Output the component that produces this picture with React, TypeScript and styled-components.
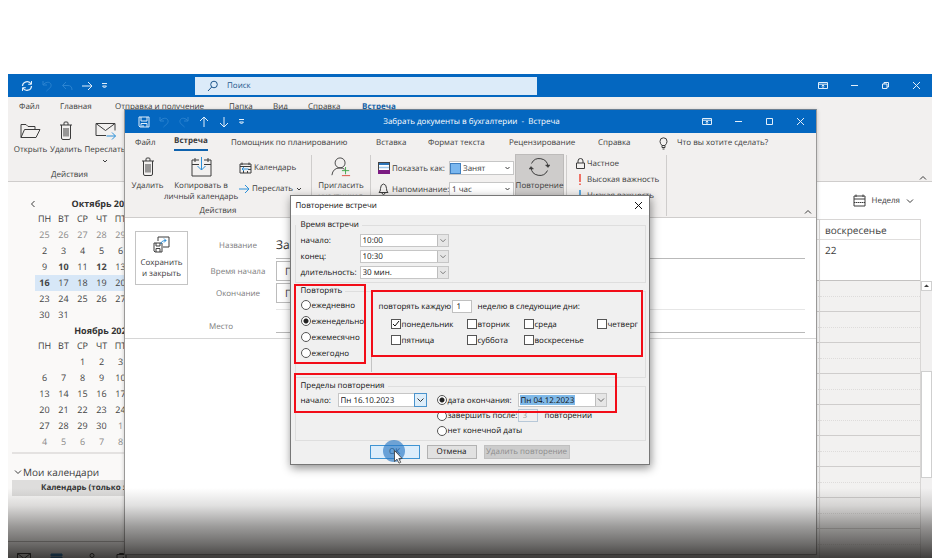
import React from "react";
import styled, { createGlobalStyle, css } from "styled-components";

const GlobalStyle = createGlobalStyle`
  *, *::before, *::after { box-sizing: border-box; }
  body { margin: 0; background: #fff; font-family: "Open Sans", "Noto Sans", sans-serif; font-size: 9px; color: #3c3c3c; overflow: hidden; text-rendering: geometricPrecision; }
  button, input, select { font: inherit; color: inherit; margin: 0; padding: 0; border: 0; background: none; border-radius: 0; text-rendering: inherit; }
  svg { display: block; flex: none; }
  a { color: inherit; text-decoration: none; }
`;

/* ---------- icons ---------- */

const Svg = styled.svg`
  fill: none;
  stroke: currentColor;
  stroke-width: 1;
`;

type IconProps = { name: keyof typeof shapes; w: number; h: number };

const shapes = {
  sync: <><path d="M1.500 6a4.600 4.600 0 0 1 8.600-2M10.500 6a4.600 4.600 0 0 1-8.600 2" strokeWidth="1.300" /><path d="M10.500 1v3.300H7.200M1.500 11V7.700h3.300" /></>,
  undo: <path d="M2 1v4h4M2 5c2-3 7-4 8-.500.600 3-2 4-4.500 6.500" />,
  redo: <path d="M10 1v4H6M10 5C8 2 3 1 2 4.500c-.600 3 2 4 4.500 6.500" />,
  reply: <path d="M5 2 1.500 5.500 5 9M1.500 5.500H7q4 0 4 4.500" />,
  right: <path d="M1 6h10M7 2l4 4-4 4" />,
  up: <path d="M6 11V1M2 5l4-4 4 4" />,
  down: <path d="M6 1v10M2 7l4 4 4-4" />,
  more: <path d="M1 2.500h5M1.500 5 3.500 7 5.500 5Z" />,
  search: <><circle cx="7" cy="4.500" r="3.300" /><path d="M4.700 7 1 11" /></>,
  save: <path d="M1 1h10v10H2L1 10ZM3 1v4h6V1M3 11V7.500h6V11M5 11V9" />,
  ribbon: <path d="M.500 1.500h9v6h-9ZM.500 3.200h9M5 7V4M3.700 5.200 5 4l1.300 1.200" />,
  min: <path d="M1 4.500h7" />,
  max: <path d="M1.500 1.500h6v6h-6Z" />,
  restore: <path d="M1.500 3h4.500v4.500H1.500ZM3 3V1.500h4.500V6H6" />,
  close: <path d="m1 1 7 7M8 1 1 8" />,
  chevDown: <path d="m1 1.500 3 3 3-3" />,
  chevUp: <path d="m1 4.500 3-3 3 3" />,
  smallDown: <path d="m2 2 2 2 2-2" />,
  chevLeft: <path d="M4.500 1 1.500 4l3 3" />,
  caret: <path d="M1 4h5L3.500 1.500Z" fill="currentColor" stroke="none" />,
  folder: <path d="M1 15V2h5l2 2h7v3M1 15 4.500 7H20l-4 8Z" />,
  trash: <path d="M1 4h12M5 4V2q0-1 1-1h2q1 0 1 1v2M2.500 4v13q0 1.500 1.500 1.500h6q1.500 0 1.500-1.500V4M5 7v8.500M7 7v8.500M9 7v8.500" />,
  mail: <><path d="M11 14H1V2h19v7M1 2l9.500 7L20 2" /><path stroke="#2b8fd8" d="M11.500 14.500h9M17 11l3.500 3.500L17 18" /></>,
  calDown: <><path d="M8 3H1v16h19V3h-7M1 7.500h7M13 7.500h7M4 1v4M17 1v4" /><path stroke="#2b8fd8" d="M10.500 0v13M6.500 9l4 4 4-4" /></>,
  calLeft: <><path d="M1 2h11v9H1ZM1 4.500h11M3 .500V3M10 .500V3M9 7.500h3M4.500 9v2M8.500 9v2" /><path stroke="#2b8fd8" d="M3 7h6.500M5 5 3 7l2 2" /></>,
  blueRight: <path stroke="#2b8fd8" d="M0 5h10M6 1l4 4-4 4" />,
  person: <><circle cx="10" cy="6.500" r="5.500" /><path d="M1 20q1-8 9-8 3 0 5 1.500" /><path stroke="#3fa345" d="M16 11v8M12 15h8" /><path stroke="#d9473b" d="M12 20.500h9" /></>,
  status: <><rect x=".500" y=".500" width="11" height="11" stroke="#444" fill="#fff" /><path stroke="#2d75b8" strokeWidth="2" d="M1 2h10" /><path stroke="#9dc7ea" strokeWidth="1.500" d="M1 5.500h10" /><path stroke="#7b1b82" strokeWidth="4" d="M0 10h12" /></>,
  bell: <path d="M1 9.500q1.500-1 1.500-4 0-4 3-4.500 3 .500 3 4.500 0 3 1.500 4ZM4 9.500q0 2 1.500 2T7 9.500" />,
  cycle: <><path d="M2.500 6.500a8.700 8.700 0 0 1 16.500 3M18.500 13.500a8.700 8.700 0 0 1-16.500-3" /><path d="m16.500 8 2.500 2.500L21 8ZM4.500 12 2 9.500 0 12Z" fill="currentColor" strokeWidth=".5" /></>,
  lock: <path d="M.500 5h8v5.500h-8ZM2 5V3q0-2.500 2.500-2.500T7 3v2" />,
  high: <path stroke="#f0483a" strokeWidth="1.500" d="M4 0v8M4 9.500V11" />,
  low: <path stroke="#2b8fd8" strokeWidth="1.500" d="M4 0v11M2 8l2 2 2-2" />,
  bulb: <path d="M3 8.500Q1 6.500 1 4.300a3.500 3.500 0 0 1 7 0Q8 6.500 6 8.500v2H3ZM3 8.500h3M3.500 12h2" />,
  saveClose: <><path d="M5 5V1h11v10h-6M1 7h8v9H2l-1-1ZM3 7v3h4V7M3 16v-3.500h4V16" /><path stroke="#2b8fd8" d="M8 8q0-3.500 5-3.500M11 2.500l2 2-2 2" /></>,
  week: <><path d="M1 2h11v10H1ZM1 5h11M3 .500V3M10 .500V3" /><path d="M1 8.500h11" strokeDasharray="1.500 .5" /></>,
  navMail: <path d="M.500 1.500h13v9H.500Zl6.500 5 6.500-5" />,
  navCal: <path stroke="#1573b8" fill="#1573b8" d="M1 2h11v2H1ZM1 5v6h11V5" />,
  navPeople: <path d="M8 3.500a2 2 0 1 0 4 0 2 2 0 0 0-4 0ZM6 11q0-4 4-4t4 4M3 6.500h.500M1 10l3-2" />,
  navTask: <path d="M1 2.500h9v9H1ZM3.500 2.500v-1h4v1M3.500 6l1.500 1.500L8 5" />,
};

const Icon = ({ name, w, h }: IconProps) => (
  <Svg width={w} height={h} viewBox={`0 0 ${w} ${h}`} aria-hidden="true">{shapes[name]}</Svg>
);

/* ---------- desktop and main window ---------- */

const Page = styled.div`
  height: 100vh;
  padding: 74px 8px 0;
  overflow: hidden;
`;
const MainWindow = styled.div`
  position: relative;
  height: 100%;
  display: flex;
  flex-direction: column;
  background: #fff;
  overflow: hidden;
`;
const TitleBar = styled.header`
  flex: none;
  height: 23px;
  display: flex;
  align-items: center;
  background: #0467c0;
  color: #fff;
`;
const QuickBar = styled.div<{ $fixed?: boolean }>`
  ${(p) => (p.$fixed ? css`flex: none; width: 187px;` : css`flex: 1;`)}
  display: flex;
  align-items: center;
  gap: 8px;
  padding-left: 13px;
`;
const BarButton = styled.button<{ $faded?: boolean }>`
  display: flex;
  color: ${(p) => (p.$faded ? "#2b83d0" : "#e2effa")};
`;
const WindowButtons = styled.div`
  flex: 1;
  display: flex;
  justify-content: flex-end;
  align-items: center;
  gap: 22px;
  padding-right: 11px;
`;
const SearchBox = styled.label`
  flex: none;
  width: 37%;
  height: 18px;
  display: flex;
  align-items: center;
  gap: 9px;
  padding-left: 12px;
  background: #dcebf9;
  color: #1d568c;
  font-size: 8px;
  input { flex: 1; min-width: 0; outline: 0; }
  input::placeholder { color: #1d568c; opacity: 1; }
`;
const Ribbon = styled.div`
  flex: none;
  display: flex;
  flex-direction: column;
  background: #f2f0ef;
  border-bottom: 1px solid #cfcdcc;
`;
const Tabs = styled.nav<{ $columns: string; $inset: number }>`
  display: grid;
  grid-template-columns: ${(p) => p.$columns};
  height: 20px;
  line-height: 20px;
  padding-left: ${(p) => p.$inset}px;
  font-size: 8px;
  white-space: nowrap;
`;
const Tab = styled.a<{ $active?: boolean; $blue?: boolean }>`
  justify-self: start;
  display: flex;
  align-items: center;
  gap: 9px;
  height: 20px;
  ${(p) => p.$active && css`height: 18px; font-weight: 700; border-bottom: 2px solid #0f62ad;`}
  ${(p) => p.$blue && css`font-weight: 700; color: #1463a8;`}
`;
const MainTools = styled.div`
  display: flex;
  justify-content: space-between;
  align-items: flex-end;
  height: 64px;
  padding: 0 5px 0 6px;
`;
const ToolGroup = styled.div`
  display: flex;
  flex-direction: column;
  align-items: center;
`;
const ToolRow = styled.div`
  display: flex;
  gap: 3px;
  align-items: flex-start;
  height: 48px;
`;
const BigTool = styled.button<{ $width: number; $pressed?: boolean }>`
  flex: none;
  width: ${(p) => p.$width}px;
  display: flex;
  flex-direction: column;
  align-items: center;
  gap: 3px;
  line-height: 11px;
  font-size: 8px;
  white-space: nowrap;
  > svg:first-child { height: 20px; }
  ${(p) => p.$pressed && css`background: #cecccb; border: 1px solid #bdbbba; margin-top: -3px; padding-top: 2px; height: 60px;`}
`;
const GroupLabel = styled.div`
  font-size: 8px;
  line-height: 12px;
`;
const IconButton = styled.button`
  display: flex;
`;
const MainBody = styled.div`
  flex: 1;
  min-height: 0;
  display: flex;
`;

/* ---------- sidebar ---------- */

const Sidebar = styled.aside`
  flex: none;
  width: 170px;
  padding: 14px 0 0 4px;
  background: #faf9f8;
`;
const MonthHead = styled.div`
  display: grid;
  grid-template-columns: 6px 120px;
  column-gap: 7px;
  align-items: center;
  height: 15px;
  padding-left: 18px;
`;
const MonthTitle = styled.div`
  grid-column: 2;
  text-align: center;
  font-weight: 700;
  color: #333;
`;
const MonthTable = styled.table`
  margin-left: 23px;
  border-collapse: collapse;
  table-layout: fixed;
  width: 133px;
  th, td { height: 16px; padding: 0; text-align: center; font-weight: 400; line-height: 16px; }
`;
const Day = styled.td<{ $bold?: boolean; $muted?: boolean }>`
  && { font-weight: ${(p) => (p.$bold ? 700 : 400)}; }
  color: ${(p) => (p.$muted ? "#8b8a89" : "#444")};
`;
const Week = styled.tr<{ $current?: boolean }>`
  background: ${(p) => (p.$current ? "#d7e7f7" : "transparent")};
`;
const ListHead = styled.button`
  display: flex;
  align-items: center;
  gap: 1px;
  width: 100%;
  height: 28px;
  margin-top: 2px;
  padding: 9px 0 0 2px;
  border-top: 2px solid #e4e2e1;
  font-size: 10px;
`;
const ListItem = styled.div`
  height: 16px;
  line-height: 16px;
  padding-left: 29px;
  background: #dedddc;
  font-weight: 700;
  font-size: 8px;
  white-space: nowrap;
  color: #333;
`;
const NavIcons = styled.div`
  display: flex;
  gap: 19px;
  margin: 45px 0 0 -4px;
  padding: 10px 0 0 9px;
  border-top: 1px solid #b5b3b2;
  color: #222;
`;

/* ---------- week view ---------- */

const WeekView = styled.main`
  flex: 1;
  display: flex;
  flex-direction: column;
  min-width: 0;
`;
const ViewBar = styled.div`
  flex: none;
  height: 37px;
  display: flex;
  justify-content: flex-end;
  align-items: center;
  padding-right: 18px;
  font-size: 8px;
`;
const ViewButton = styled.button`
  display: flex;
  align-items: center;
  gap: 6px;
`;
const WeekScroll = styled.div`
  flex: 1;
  min-height: 0;
  display: flex;
`;
const DayColumn = styled.section<{ $grow?: boolean }>`
  ${(p) => (p.$grow ? css`flex: 1;` : css`flex: none; width: 101px;`)}
  display: flex;
  flex-direction: column;
  border: 1px solid #d8d6d5;
  border-width: 1px 1px 0 0;
`;
const DayName = styled.div`
  height: 20px;
  padding-left: 5px;
  line-height: 20px;
  font-size: 10px;
  border-bottom: 1px solid #e0dedd;
`;
const DayNumber = styled.div`
  height: 41px;
  padding: 3px 5px;
  font-size: 10px;
  border-bottom: 1px solid #c4c2c1;
`;
const Slots = styled.div<{ $light?: boolean }>`
  flex: 1;
  overflow: hidden;
  background: ${(p) => (p.$light ? "#fafafa" : "#f2f1f0")};
`;
const Slot = styled.div`
  height: 31px;
  border-bottom: 1px solid #cfcdcc;
  &::before { content: ""; display: block; height: 16px; border-bottom: 1px dotted #dedcdb; }
`;
const ScrollBar = styled.div`
  flex: none;
  width: 11px;
  margin-top: 62px;
  display: flex;
  flex-direction: column;
  background: #f1f0f0;
`;
const ScrollUp = styled.button`
  display: flex;
  justify-content: center;
  align-items: center;
  height: 10px;
  background: #fff;
  border: 1px solid #cfcfcf;
`;
const Thumb = styled.div`
  height: 107px;
  margin-top: 80px;
  background: #fff;
  border: 1px solid #cfcfcf;
`;

/* ---------- meeting window ---------- */

const MeetingWindow = styled.div`
  position: absolute;
  inset: 35px 115px 3px 116px;
  display: flex;
  flex-direction: column;
  background: #fff;
  border: 1px solid #9a9998;
  border-top-color: #6d7f91;
  box-shadow: 0 1px 4px rgba(0, 0, 0, 0.2);
`;
const WindowTitle = styled.h1`
  margin: 0;
  font-size: 8px;
  font-weight: 400;
  white-space: pre;
`;
const Groups = styled.div`
  display: flex;
  align-items: flex-start;
  height: 64px;
`;
const Group = styled.div<{ $width: number; $inset?: number }>`
  flex: none;
  width: ${(p) => p.$width}px;
  height: 61px;
  margin-top: 2px;
  padding: 2px 0 0 ${(p) => p.$inset ?? 0}px;
  display: flex;
  gap: 1px;
  border-right: 1px solid #cfcdcc;
`;
const ActionsGroup = styled(Group)`
  flex-direction: column;
  align-items: center;
  gap: 0;
`;
const ActionTools = styled.div`
  flex: none;
  width: 100%;
  height: 48px;
  display: flex;
  gap: 1px;
  padding: 0 0 0 7px;
`;
const Stack = styled.div<{ $pad: number; $gap: number }>`
  display: flex;
  flex-direction: column;
  gap: ${(p) => p.$gap}px;
  padding-top: ${(p) => p.$pad}px;
`;
const SmallTool = styled.button`
  display: flex;
  align-items: center;
  gap: 2px;
  height: 13px;
  font-size: 8px;
  white-space: nowrap;
`;
const Option = styled.label`
  display: grid;
  grid-template-columns: 12px 55px 65px;
  column-gap: 2px;
  align-items: center;
  height: 14px;
  font-size: 8px;
  white-space: nowrap;
`;
const Fill = styled.div`
  flex: 1;
  align-self: flex-end;
  display: flex;
  justify-content: flex-end;
  padding: 0 4px 2px 0;
`;

const SelectWrap = styled.span<{ $boxed?: boolean; $active?: boolean }>`
  display: flex;
  height: 14px;
  background: #fff;
  border: 1px solid #c6c6c6;
  select, input { flex: 1; min-width: 0; appearance: none; padding-left: 2px; outline: 0; }
  > svg { height: 100%; width: 11px; padding: 3px 1px; }
  ${(p) => p.$boxed && css`> svg { background: #e6e6e6; border-left: 1px solid #bdbdbd; color: #666; }`}
  ${(p) => p.$active && css`> svg { background: #deeefa; outline: 1px solid #4a93cc; border: 0; color: #333; }`}
`;
const Swatch = styled.span`
  width: 11px;
  height: 11px;
  align-self: center;
  background: #7ab7ef;
  border: 1px solid #3f7fc0;
`;

const Form = styled.div`
  display: flex;
  padding: 13px 11px 5px 10px;
  border-bottom: 1px solid #d6d6d6;
`;
const SaveClose = styled.button`
  flex: none;
  width: 53px;
  height: 54px;
  display: flex;
  flex-direction: column;
  align-items: center;
  gap: 4px;
  padding-top: 4px;
  border: 1px solid #c4c4c4;
  font-size: 8px;
  line-height: 11px;
`;
const SaveLine = styled.span`
  display: block;
`;
const Fields = styled.div`
  flex: 1;
  margin-left: 12px;
  display: grid;
  grid-template-columns: 76px 1fr;
  grid-template-rows: 28px 1px 22px 22px 29px;
`;
const FieldLabel = styled.label<{ $shift?: boolean }>`
  align-self: center;
  text-align: center;
  font-size: 8px;
  color: #7b7b7b;
  padding-right: ${(p) => (p.$shift ? 34 : 0)}px;
  padding-top: ${(p) => (p.$shift ? 16 : 0)}px;
`;
const FieldLine = styled.div<{ $top?: boolean }>`
  display: flex;
  margin-top: ${(p) => (p.$top ? 5 : 0)}px;
  border-bottom: 1px solid #b9b9b9;
  ${(p) => p.$top && css`border-top: 1px solid #e6e6e6;`}
  input { flex: 1; min-width: 0; font-size: 12px; outline: 0; color: #333; }
`;
const DateBox = styled.input`
  && { justify-self: start; width: 90px; height: 20px; align-self: center; border: 1px solid #bcbcbc; padding-left: 8px; font-size: 10px; }
`;
const RowGap = styled.span`
  grid-column: 1 / -1;
`;

/* ---------- recurrence dialog ---------- */

const DialogLayer = styled.div`
  position: absolute;
  inset: 121px 0 0;
  display: flex;
  justify-content: center;
  align-items: flex-start;
`;
const Dialog = styled.form`
  position: relative;
  width: 360px;
  margin-right: 1px;
  background: #f0f0f0;
  border: 1px solid #777;
  box-shadow: 1px 3px 9px rgba(0, 0, 0, 0.45);
  font-size: 8px;
  color: #111;
  padding-bottom: 5px;
`;
const DialogTitle = styled.div`
  display: flex;
  align-items: center;
  justify-content: space-between;
  height: 19px;
  padding: 0 6px 0 5px;
  background: #fff;
`;
const PanelFrame = styled.div`
  margin: 0 3px 0 4px;
  border: 1px solid #dedede;
`;
const Legend = styled.div`
  width: fit-content;
  height: 12px;
  line-height: 12px;
  margin-top: -7px;
  padding: 0 3px 0 5px;
  background: #f0f0f0;
`;
const TimePanel = styled(PanelFrame)`
  height: 58px;
  margin-top: 10px;
`;
const PatternPanel = styled(PanelFrame)`
  height: 87px;
  margin-top: 8px;
`;
const RangePanel = styled(PanelFrame)`
  height: 55px;
  margin-top: 8px;
`;
const TimeRow = styled.label`
  display: grid;
  grid-template-columns: 59px 89px;
  align-items: center;
  height: 16px;
  padding-left: 5px;
  ${SelectWrap} { height: 13px; }
`;
const TimeRows = styled.div`
  padding-top: 1px;
`;
const PatternBody = styled.div`
  display: flex;
`;
const RadioList = styled.div`
  flex: none;
  width: 76px;
  height: 75px;
  padding-left: 5px;
  border-right: 1px solid #c4c4c4;
`;
const Choice = styled.label`
  display: flex;
  align-items: center;
  gap: 1px;
  height: 16px;
  white-space: nowrap;
  input[type="radio"], input[type="checkbox"] {
    appearance: none;
    flex: none;
    width: 10px;
    height: 10px;
    border: 1px solid #555;
    background: #fff;
  }
  input[type="radio"] { border-radius: 50%; }
  input[type="radio"]:checked { background: radial-gradient(circle, #222 0 2px, #fff 3px); }
`;
const Check = styled.span`
  display: grid;
  > * { grid-area: 1 / 1; }
  svg { place-self: center; pointer-events: none; }
`;
const WeekPattern = styled.div`
  padding-left: 7px;
`;
const Every = styled.label`
  display: grid;
  grid-template-columns: 67px 20px auto;
  column-gap: 6px;
  align-items: center;
  height: 19px;
  white-space: nowrap;
`;
const SmallInput = styled.input`
  && { width: 20px; height: 13px; border: 1px solid #c0c0c0; background: #fff; padding-left: 4px; }
  &&:disabled { background: #f0f0f0; border-color: #b7c8d8; color: #999; }
`;
const Days = styled.div`
  display: grid;
  grid-template-columns: 76px 57px 73px auto;
  padding-left: 12px;
`;
const RangeBody = styled.div`
  display: grid;
  grid-template-columns: 136px 81px 1fr;
  grid-template-rows: 16px 15px 15px;
  align-items: center;
  padding-left: 5px;
`;
const StartDate = styled.label`
  display: grid;
  grid-template-columns: 37px 89px;
  align-items: center;
`;
const ComboBox = styled(SelectWrap)`
  width: 89px;
`;
const EndDate = styled.input`
  && { flex: none; width: 55px; height: 10px; margin: 1px 20px 1px 1px; padding-left: 1px; background: #7fb9e8; }
`;
const AfterCount = styled.label`
  display: flex;
  align-items: center;
  gap: 7px;
`;
const Actions = styled.div`
  display: flex;
  justify-content: center;
  gap: 7px;
  margin-top: 4px;
`;
const ActionButton = styled.button<{ $width: number; $primary?: boolean }>`
  width: ${(p) => p.$width}px;
  height: 14px;
  line-height: 12px;
  white-space: nowrap;
  background: ${(p) => (p.$primary ? "#dcedfb" : "#e1e1e1")};
  border: 1px solid ${(p) => (p.$primary ? "#3f94d3" : "#b2b2b2")};
  &:disabled { background: #cccccc; border-color: #c0c0c0; color: #8c8c8c; }
`;

/* ---------- overlays ---------- */

const Highlight = styled.div<{ $x: number; $y: number; $w: number; $h: number }>`
  position: absolute;
  left: ${(p) => p.$x}px;
  top: ${(p) => p.$y}px;
  width: ${(p) => p.$w}px;
  height: ${(p) => p.$h}px;
  border: 2px solid #f20d18;
  pointer-events: none;
`;
const Pointer = styled.svg`
  position: absolute;
  left: 91px;
  top: 242px;
  pointer-events: none;
`;
const Fade = styled.div`
  position: absolute;
  inset: auto 0 0;
  height: 70px;
  pointer-events: none;
  background: linear-gradient(rgba(20, 18, 16, 0), rgba(20, 18, 16, 0.13) 25%, rgba(20, 18, 16, 0.42) 55%, rgba(20, 18, 16, 0.62) 80%, rgba(20, 18, 16, 0.8));
`;

const dayNames = ["ПН", "ВТ", "СР", "ЧТ", "ПТ", "СБ", "ВС"];
type MonthProps = { start: number; previous: number; length: number; bold?: number[]; current?: number; rows: number; tail?: boolean };

const Month = ({ start, previous, length, bold = [], current, rows, tail }: MonthProps) => (
  <MonthTable>
    <thead><tr>{dayNames.map((d) => <th key={d} scope="col">{d}</th>)}</tr></thead>
    <tbody>
      {Array.from({ length: rows }, (_, r) => {
        const first = r * 7 - start + 1;
        return (
          <Week key={r} $current={current !== undefined && first === current}>
            {dayNames.map((d, c) => {
              const n = first + c;
              const before = n < 1;
              const after = n > length;
              const text = before ? (previous ? previous + n : "") : after ? (tail ? n - length : "") : n;
              return <Day key={d} $bold={bold.includes(n)} $muted={before || after}>{text}</Day>;
            })}
          </Week>
        );
      })}
    </tbody>
  </MonthTable>
);

const WindowControls = ({ restore }: { restore?: boolean }) => (
  <WindowButtons>
    <BarButton aria-label="Параметры ленты"><Icon name="ribbon" w={10} h={9} /></BarButton>
    <BarButton aria-label="Свернуть"><Icon name="min" w={9} h={9} /></BarButton>
    <BarButton aria-label="Развернуть"><Icon name={restore ? "restore" : "max"} w={9} h={9} /></BarButton>
    <BarButton aria-label="Закрыть"><Icon name="close" w={9} h={9} /></BarButton>
  </WindowButtons>
);

const TimeSelect = ({ label, value }: { label: string; value: string }) => (
  <TimeRow>
    {label}
    <SelectWrap $boxed>
      <select defaultValue={value}><option>{value}</option></select>
      <Icon name="chevDown" w={8} h={6} />
    </SelectWrap>
  </TimeRow>
);

const Radio = ({ group, label, on }: { group: string; label: string; on?: boolean }) => (
  <Choice><input type="radio" name={group} defaultChecked={on} />{label}</Choice>
);

const DayCheck = ({ label, on }: { label: string; on?: boolean }) => (
  <Choice>
    <Check>
      <input type="checkbox" defaultChecked={on} />
      {on && <Svg width="8" height="8" viewBox="0 0 8 8"><path d="m1 4 2 2 4-5" /></Svg>}
    </Check>
    {label}
  </Choice>
);

const RecurrenceDialog = () => (
  <DialogLayer>
    <Dialog role="dialog" aria-label="Повторение встречи">
      <DialogTitle>
        Повторение встречи
        <IconButton type="button" aria-label="Закрыть"><Icon name="close" w={9} h={9} /></IconButton>
      </DialogTitle>
      <TimePanel role="group" aria-label="Время встречи">
        <Legend>Время встречи</Legend>
        <TimeRows>
          <TimeSelect label="начало:" value="10:00" />
          <TimeSelect label="конец:" value="10:30" />
          <TimeSelect label="длительность:" value="30 мин." />
        </TimeRows>
      </TimePanel>
      <PatternPanel role="group" aria-label="Повторять">
        <Legend>Повторять</Legend>
        <PatternBody>
          <RadioList>
            <Radio group="pattern" label="ежедневно" />
            <Radio group="pattern" label="еженедельно" on />
            <Radio group="pattern" label="ежемесячно" />
            <Radio group="pattern" label="ежегодно" />
          </RadioList>
          <WeekPattern>
            <Every>
              повторять каждую
              <SmallInput defaultValue="1" />
              <span>неделю в следующие дни:</span>
            </Every>
            <Days>
              <DayCheck label="понедельник" on />
              <DayCheck label="вторник" />
              <DayCheck label="среда" />
              <DayCheck label="четверг" />
              <DayCheck label="пятница" />
              <DayCheck label="суббота" />
              <DayCheck label="воскресенье" />
            </Days>
          </WeekPattern>
        </PatternBody>
      </PatternPanel>
      <RangePanel role="group" aria-label="Пределы повторения">
        <Legend>Пределы повторения</Legend>
        <RangeBody>
          <StartDate>
            начало:
            <ComboBox $boxed $active>
              <input defaultValue="Пн 16.10.2023" />
              <Icon name="chevDown" w={8} h={6} />
            </ComboBox>
          </StartDate>
          <Radio group="range" label="дата окончания:" on />
          <ComboBox $boxed>
            <EndDate aria-label="дата окончания" defaultValue="Пн 04.12.2023" />
            <Icon name="chevDown" w={8} h={6} />
          </ComboBox>
          <span />
          <Radio group="range" label="завершить после:" />
          <AfterCount><SmallInput defaultValue="3" disabled />повторений</AfterCount>
          <span />
          <Radio group="range" label="нет конечной даты" />
        </RangeBody>
      </RangePanel>
      <Actions>
        <ActionButton type="button" $width={50} $primary>ОК</ActionButton>
        <ActionButton type="button" $width={50}>Отмена</ActionButton>
        <ActionButton type="button" $width={86} disabled>Удалить повторение</ActionButton>
      </Actions>
      <Highlight $x={3} $y={88} $w={72} $h={80} />
      <Highlight $x={80} $y={94} $w={272} $h={67} />
      <Highlight $x={3} $y={177} $w={323} $h={40} />
      <Pointer width="26" height="27" viewBox="0 0 26 27">
        <circle cx="12" cy="13" r="11" fill="#2878c4" fillOpacity=".65" />
        <path d="M12.500 12.500v11l2.500-2.300 2 4 1.700-.900-1.900-3.800h3.300Z" fill="#fff" stroke="#333" strokeWidth=".8" />
      </Pointer>
    </Dialog>
  </DialogLayer>
);

const Meeting = () => (
  <MeetingWindow>
    <TitleBar>
      <QuickBar>
        <BarButton aria-label="Сохранить"><Icon name="save" w={12} h={12} /></BarButton>
        <BarButton $faded aria-label="Отменить"><Icon name="undo" w={12} h={12} /></BarButton>
        <BarButton $faded aria-label="Вернуть"><Icon name="redo" w={12} h={12} /></BarButton>
        <BarButton aria-label="Предыдущий"><Icon name="up" w={12} h={12} /></BarButton>
        <BarButton aria-label="Следующий"><Icon name="down" w={12} h={12} /></BarButton>
        <BarButton aria-label="Настроить панель"><Icon name="more" w={7} h={9} /></BarButton>
      </QuickBar>
      <WindowTitle>Забрать документы в бухгалтерии  -  Встреча</WindowTitle>
      <WindowControls />
    </TitleBar>
    <Ribbon>
      <Tabs $columns="39px 57px 145px 52px 81px 89px 61px auto" $inset={10}>
        <Tab href="#">Файл</Tab>
        <Tab href="#" $active>Встреча</Tab>
        <Tab href="#">Помощник по планированию</Tab>
        <Tab href="#">Вставка</Tab>
        <Tab href="#">Формат текста</Tab>
        <Tab href="#">Рецензирование</Tab>
        <Tab href="#">Справка</Tab>
        <Tab href="#"><Icon name="bulb" w={9} h={13} />Что вы хотите сделать?</Tab>
      </Tabs>
      <Groups>
        <ActionsGroup $width={187}>
          <ActionTools>
            <BigTool $width={31}><Icon name="trash" w={14} h={20} />Удалить</BigTool>
            <BigTool $width={74}><Icon name="calDown" w={21} h={20} /><span>Копировать в<br />личный календарь</span></BigTool>
            <Stack $pad={4} $gap={8}>
              <SmallTool><Icon name="calLeft" w={13} h={12} />Календарь</SmallTool>
              <SmallTool><Icon name="blueRight" w={11} h={10} />Переслать<Icon name="smallDown" w={8} h={6} /></SmallTool>
            </Stack>
          </ActionTools>
          <GroupLabel>Действия</GroupLabel>
        </ActionsGroup>
        <Group $width={59}>
          <BigTool $width={58}><Icon name="person" w={22} h={22} /><span>Пригласить<br />участников</span></BigTool>
        </Group>
        <Group $width={196} $inset={7}>
          <Stack $pad={4} $gap={7}>
            <Option>
              <Icon name="status" w={12} h={12} />Показать как:
              <SelectWrap><Swatch /><select><option>Занят</option></select><Icon name="smallDown" w={8} h={6} /></SelectWrap>
            </Option>
            <Option>
              <Icon name="bell" w={11} h={12} />Напоминание:
              <SelectWrap><select><option>1 час</option></select><Icon name="smallDown" w={8} h={6} /></SelectWrap>
            </Option>
          </Stack>
          <BigTool $width={49} $pressed><Icon name="cycle" w={21} h={20} />Повторение</BigTool>
        </Group>
        <Group $width={100} $inset={9}>
          <Stack $pad={0} $gap={3}>
            <SmallTool><Icon name="lock" w={9} h={11} />Частное</SmallTool>
            <SmallTool><Icon name="high" w={9} h={11} />Высокая важность</SmallTool>
            <SmallTool><Icon name="low" w={9} h={11} />Низкая важность</SmallTool>
          </Stack>
        </Group>
        <Fill><IconButton aria-label="Свернуть ленту"><Icon name="chevUp" w={8} h={6} /></IconButton></Fill>
      </Groups>
    </Ribbon>
    <Form>
      <SaveClose><Icon name="saveClose" w={17} h={17} /><span><SaveLine>Сохранить</SaveLine><SaveLine>и закрыть</SaveLine></span></SaveClose>
      <Fields>
        <FieldLabel htmlFor="name">Название</FieldLabel>
        <FieldLine><input id="name" defaultValue="Забрать документы в бухгалтерии" /></FieldLine>
        <RowGap />
        <FieldLabel htmlFor="start">Время начала</FieldLabel>
        <DateBox id="start" defaultValue="Пн 16.10.2023" />
        <FieldLabel htmlFor="end">Окончание</FieldLabel>
        <DateBox id="end" defaultValue="Пн 16.10.2023" />
        <FieldLabel $shift htmlFor="place">Место</FieldLabel>
        <FieldLine $top><input id="place" /></FieldLine>
      </Fields>
    </Form>
  </MeetingWindow>
);

const slots = Array.from({ length: 9 }, (_, i) => i);

export default function App() {
  return (
    <Page>
      <GlobalStyle />
      <MainWindow>
        <TitleBar>
          <QuickBar $fixed>
            <BarButton aria-label="Обновить"><Icon name="sync" w={12} h={12} /></BarButton>
            <BarButton $faded aria-label="Отменить"><Icon name="undo" w={12} h={12} /></BarButton>
            <BarButton $faded aria-label="Ответить"><Icon name="reply" w={12} h={12} /></BarButton>
            <BarButton aria-label="Переслать"><Icon name="right" w={12} h={12} /></BarButton>
            <BarButton aria-label="Настроить панель"><Icon name="more" w={7} h={9} /></BarButton>
          </QuickBar>
          <SearchBox><Icon name="search" w={11} h={12} /><input placeholder="Поиск" aria-label="Поиск" /></SearchBox>
          <WindowControls restore />
        </TitleBar>
        <Ribbon>
          <Tabs $columns="41px 55px 114px 44px 35px 54px auto" $inset={11}>
            <Tab href="#">Файл</Tab>
            <Tab href="#">Главная</Tab>
            <Tab href="#">Отправка и получение</Tab>
            <Tab href="#">Папка</Tab>
            <Tab href="#">Вид</Tab>
            <Tab href="#">Справка</Tab>
            <Tab href="#" $blue>Встреча</Tab>
          </Tabs>
          <MainTools>
            <ToolGroup>
              <ToolRow>
                <BigTool $width={33}><Icon name="folder" w={21} h={17} />Открыть</BigTool>
                <BigTool $width={32}><Icon name="trash" w={14} h={20} />Удалить</BigTool>
                <BigTool $width={40}><Icon name="mail" w={21} h={19} />Переслать<Icon name="smallDown" w={8} h={6} /></BigTool>
              </ToolRow>
              <GroupLabel>Действия</GroupLabel>
            </ToolGroup>
            <IconButton aria-label="Свернуть ленту"><Icon name="chevUp" w={8} h={6} /></IconButton>
          </MainTools>
        </Ribbon>
        <MainBody>
          <Sidebar>
            <MonthHead>
              <IconButton aria-label="Предыдущий месяц"><Icon name="chevLeft" w={6} h={8} /></IconButton>
              <MonthTitle>Октябрь 2023</MonthTitle>
            </MonthHead>
            <Month start={6} previous={30} length={31} bold={[10, 12, 16]} current={16} rows={6} />
            <MonthHead><MonthTitle>Ноябрь 2023</MonthTitle></MonthHead>
            <Month start={2} previous={0} length={30} rows={6} tail />
            <ListHead><Icon name="chevDown" w={8} h={6} />Мои календари</ListHead>
            <ListItem>Календарь (только этот компьютер)</ListItem>
            <NavIcons>
              <Icon name="navMail" w={14} h={12} />
              <Icon name="navCal" w={13} h={12} />
              <Icon name="navPeople" w={15} h={12} />
              <Icon name="navTask" w={11} h={12} />
            </NavIcons>
          </Sidebar>
          <WeekView>
            <ViewBar><ViewButton><Icon name="week" w={13} h={13} />Неделя<Icon name="chevDown" w={8} h={6} /></ViewButton></ViewBar>
            <WeekScroll>
              <DayColumn $grow>
                <DayName>суббота</DayName>
                <DayNumber>21</DayNumber>
                <Slots $light>{slots.map((s) => <Slot key={s} />)}</Slots>
              </DayColumn>
              <DayColumn>
                <DayName>воскресенье</DayName>
                <DayNumber>22</DayNumber>
                <Slots>{slots.map((s) => <Slot key={s} />)}</Slots>
              </DayColumn>
              <ScrollBar>
                <ScrollUp aria-label="Прокрутить вверх"><Icon name="caret" w={7} h={6} /></ScrollUp>
                <Thumb />
              </ScrollBar>
            </WeekScroll>
          </WeekView>
        </MainBody>
        <Meeting />
        <RecurrenceDialog />
        <Fade />
      </MainWindow>
    </Page>
  );
}
